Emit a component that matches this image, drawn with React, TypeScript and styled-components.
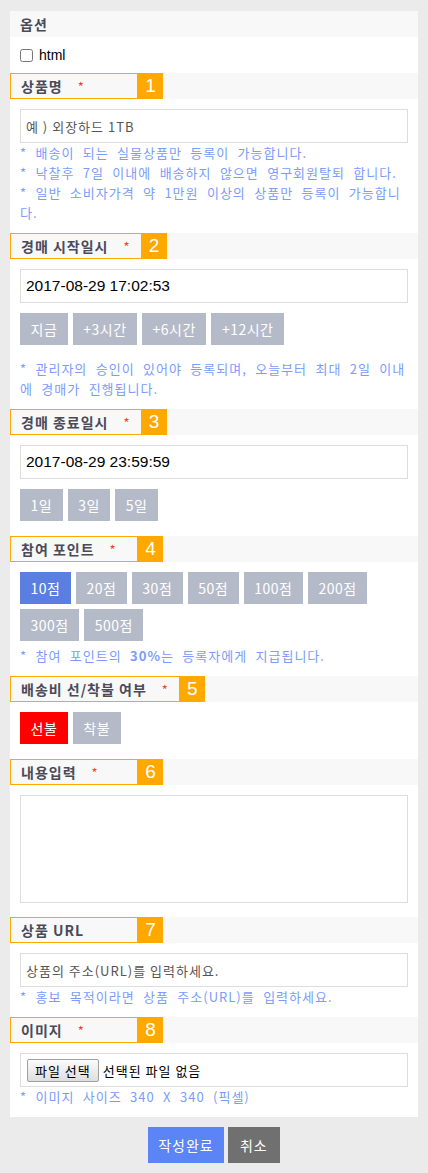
import React from 'react';
import styled, { createGlobalStyle } from 'styled-components';

const GlobalStyle = createGlobalStyle`
  body {
    margin: 0;
    background: #ebebeb;
    font-family: "Noto Sans CJK KR", "Noto Sans", sans-serif;
  }
  * { box-sizing: border-box; }
`;

type Tone = 'grey' | 'blue' | 'red';

const toneColor: Record<Tone, string> = {
  grey: '#b5bac9',
  blue: '#5a7fe1',
  red: '#ff0000',
};

const Page = styled.div`
  padding: 11px 10px 9px;
`;

const Form = styled.div`
  background: #fff;
`;

const OptionHead = styled.div`
  height: 26px;
  line-height: 26px;
  padding-left: 10px;
  background: #f8f8f8;
  font-size: 14px;
  font-weight: bold;
  letter-spacing: 1px;
  color: #4a4a58;
`;

const OptionRow = styled.label`
  height: 36px;
  padding: 0 10px;
  display: flex;
  align-items: center;
  gap: 6px;
  font-family: "Liberation Sans", "Noto Sans CJK KR", sans-serif;
  font-size: 14px;
  color: #000;

  input {
    width: 13px;
    height: 13px;
    margin: 0;
  }
`;

const HeadRow = styled.div`
  display: flex;
  height: 26px;
  background: #f8f8f8;
`;

const HeadLabel = styled.div`
  min-width: 128px;
  padding: 0 10px;
  display: flex;
  align-items: center;
  border: 1px solid #ffa800;
  font-size: 14px;
  font-weight: bold;
  letter-spacing: 1px;
  color: #4a4a58;
  white-space: nowrap;
`;

const Star = styled.span`
  margin-left: 15px;
  font-size: 13px;
  font-weight: normal;
  color: #f5461b;
`;

const HeadNum = styled.div`
  width: 25px;
  display: flex;
  align-items: center;
  justify-content: center;
  background: #ffa800;
  color: #fff;
  font-family: "Liberation Sans", sans-serif;
  font-size: 19px;
`;

const Body = styled.div`
  display: flex;
  flex-direction: column;
  padding: 10px 10px 10px;
`;

const TextInput = styled.input<{ $small?: boolean }>`
  display: block;
  width: 100%;
  height: 34px;
  padding: 0 5px;
  border: 1px solid #dddddd;
  outline: none;
  font-family: ${(p) =>
    p.$small ? '"Noto Sans CJK KR", sans-serif' : '"Liberation Sans", "Noto Sans CJK KR", sans-serif'};
  font-size: ${(p) => (p.$small ? '13px' : '15.5px')};
  letter-spacing: ${(p) => (p.$small ? '1px' : '0')};
  color: #000;

  &::placeholder {
    color: #555;
  }
`;

const TextArea = styled.textarea`
  display: block;
  width: 100%;
  height: 108px;
  margin-bottom: 4px;
  border: 1px solid #dddddd;
  outline: none;
  resize: none;
`;

const ButtonRow = styled.div<{ $top?: number }>`
  display: flex;
  flex-wrap: wrap;
  gap: 5px;
  margin-top: ${(p) => p.$top ?? 0}px;
  margin-bottom: 5px;
`;

const Chip = styled.button<{ $tone?: Tone }>`
  height: 32px;
  padding: 0 10.5px;
  border: 0;
  background: ${(p) => toneColor[p.$tone ?? 'grey']};
  color: #fff;
  font-family: "Noto Sans CJK KR", sans-serif;
  font-size: 14px;
  letter-spacing: 0.5px;
  line-height: 32px;
  cursor: pointer;
`;

const Help = styled.p<{ $top?: number }>`
  margin: ${(p) => p.$top ?? 0}px 0 0;
  font-size: 13px;
  line-height: 20px;
  letter-spacing: 1px;
  word-spacing: 4.5px;
  color: #7b9cfb;

  b {
    font-weight: bold;
  }
`;

const FileBox = styled.div`
  height: 34px;
  padding: 0 6px;
  display: flex;
  align-items: center;
  gap: 4px;
  border: 1px solid #dddddd;
  font-size: 13px;
  letter-spacing: 1px;
  color: #000;
`;

const FileButton = styled.span`
  height: 23px;
  padding: 0 7px;
  display: flex;
  align-items: center;
  border: 1px solid #a0a0a0;
  border-radius: 2px;
  background: linear-gradient(#fbfbfb, #dedede);
  font-size: 13px;
  color: #000;
`;

const Actions = styled.div`
  margin-top: 10px;
  display: flex;
  justify-content: center;
  gap: 4px;
`;

const ActionButton = styled.button<{ $primary?: boolean }>`
  height: 36px;
  min-width: 52px;
  padding: 0 10px;
  border: 0;
  background: ${(p) => (p.$primary ? '#5b84f6' : '#707070')};
  color: #fff;
  font-family: "Noto Sans CJK KR", sans-serif;
  font-size: 14px;
  letter-spacing: 1px;
  cursor: pointer;
`;

const Section = ({
  num,
  title,
  required = true,
  children,
}: {
  num: number;
  title: string;
  required?: boolean;
  children: React.ReactNode;
}) => (
  <>
    <HeadRow>
      <HeadLabel>
        {title}
        {required && <Star>*</Star>}
      </HeadLabel>
      <HeadNum>{num}</HeadNum>
    </HeadRow>
    <Body>{children}</Body>
  </>
);

const points = ['10점', '20점', '30점', '50점', '100점', '200점', '300점', '500점'];

export default function App() {
  return (
    <Page>
      <GlobalStyle />
      <Form>
        <OptionHead>옵션</OptionHead>
        <OptionRow>
          <input type="checkbox" />
          html
        </OptionRow>

        <Section num={1} title="상품명">
          <TextInput $small placeholder="예 ) 외장하드 1TB" />
          <Help>* 배송이 되는 실물상품만 등록이 가능합니다.</Help>
          <Help>* 낙찰후 7일 이내에 배송하지 않으면 영구회원탈퇴 합니다.</Help>
          <Help>* 일반 소비자가격 약 1만원 이상의 상품만 등록이 가능합니다.</Help>
        </Section>

        <Section num={2} title="경매 시작일시">
          <TextInput defaultValue="2017-08-29 17:02:53" />
          <ButtonRow $top={10}>
            <Chip>지금</Chip>
            <Chip>+3시간</Chip>
            <Chip>+6시간</Chip>
            <Chip>+12시간</Chip>
          </ButtonRow>
          <Help $top={9}>
            * 관리자의 승인이 있어야 등록되며, 오늘부터 최대 2일 이내에 경매가 진행됩니다.
          </Help>
        </Section>

        <Section num={3} title="경매 종료일시">
          <TextInput defaultValue="2017-08-29 23:59:59" />
          <ButtonRow $top={10}>
            <Chip>1일</Chip>
            <Chip>3일</Chip>
            <Chip>5일</Chip>
          </ButtonRow>
        </Section>

        <Section num={4} title="참여 포인트">
          <ButtonRow>
            {points.map((p, i) => (
              <Chip key={p} $tone={i === 0 ? 'blue' : 'grey'}>
                {p}
              </Chip>
            ))}
          </ButtonRow>
          <Help>
            * 참여 포인트의 <b>30%</b>는 등록자에게 지급됩니다.
          </Help>
        </Section>

        <Section num={5} title="배송비 선/착불 여부">
          <ButtonRow>
            <Chip $tone="red">선불</Chip>
            <Chip>착불</Chip>
          </ButtonRow>
        </Section>

        <Section num={6} title="내용입력">
          <TextArea />
        </Section>

        <Section num={7} title="상품 URL" required={false}>
          <TextInput $small placeholder="상품의 주소(URL)를 입력하세요." />
          <Help>* 홍보 목적이라면 상품 주소(URL)를 입력하세요.</Help>
        </Section>

        <Section num={8} title="이미지">
          <FileBox>
            <FileButton>파일 선택</FileButton>
            선택된 파일 없음
          </FileBox>
          <Help>* 이미지 사이즈 340 X 340 (픽셀)</Help>
        </Section>
      </Form>
      <Actions>
        <ActionButton $primary>작성완료</ActionButton>
        <ActionButton>취소</ActionButton>
      </Actions>
    </Page>
  );
}
